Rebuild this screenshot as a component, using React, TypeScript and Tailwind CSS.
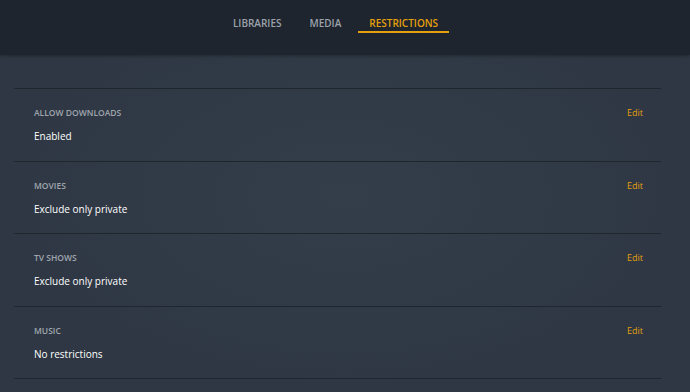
const rows = [
  { label: "ALLOW DOWNLOADS", value: "Enabled" },
  { label: "MOVIES", value: "Exclude only private" },
  { label: "TV SHOWS", value: "Exclude only private" },
  { label: "MUSIC", value: "No restrictions" },
];

export default function App() {
  return (
    <div
      className="w-[690px] h-[392px] overflow-hidden bg-[radial-gradient(ellipse_at_center,#343e4b_0%,#2e3743_70%)] font-['Open_Sans',sans-serif]"
    >
      {/* Tabs header */}
      <div className="h-[55px] bg-[#1f252e] flex justify-center pr-[8px] shadow-[0_1px_3px_rgba(0,0,0,0.3)]">
        <button className="pt-[15px] text-[10px] font-semibold text-[#9ba2ab] h-[33px] border-b-2 border-transparent">
          LIBRARIES
        </button>
        <button className="ml-[28px] pt-[15px] text-[10px] font-semibold text-[#9ba2ab] h-[33px] border-b-2 border-transparent">
          MEDIA
        </button>
        <button className="ml-[17px] pt-[15px] text-[10px] font-semibold text-[#e5a00d] h-[33px] px-[11px] border-b-2 border-[#e5a00d]">
          RESTRICTIONS
        </button>
      </div>

      {/* Settings list */}
      <div className="pt-[33px] pl-[14px] pr-[29px]">
        <div className="border-t border-[#1f262e]">
          {rows.map((r) => (
            <div
              key={r.label}
              className="h-[72.5px] border-b border-[#1f262e] pl-[20px] pr-[18px] pt-[18px] flex justify-between"
            >
              <div>
                <div className="text-[8.5px] font-semibold text-[#a0a6ae] leading-[12px]">
                  {r.label}
                </div>
                <div className="text-[10px] text-white mt-[9px] leading-[16px]">
                  {r.value}
                </div>
              </div>
              <button className="text-[9px] text-[#e5a00d] self-start leading-[12px]">Edit</button>
            </div>
          ))}
        </div>
      </div>
    </div>
  );
}
